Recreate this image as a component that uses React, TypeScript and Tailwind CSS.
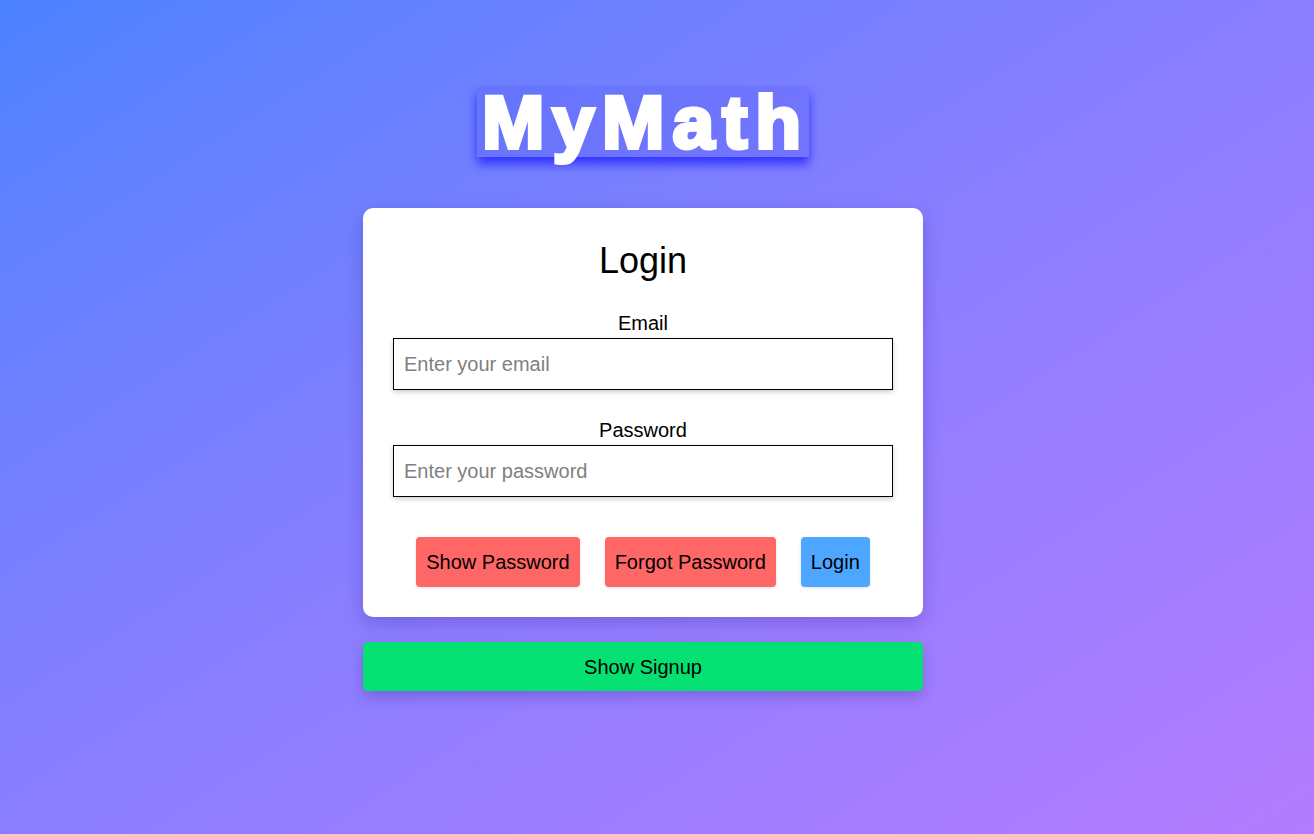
import { useState } from "react";

const FONT = "font-['Liberation_Sans',Arial,sans-serif]";

export default function App() {
  const [showPassword, setShowPassword] = useState(false);

  return (
    <div
      className={`${FONT} min-h-screen w-full bg-gradient-to-br from-[#4b82ff] via-[#8a7eff] to-[#b47cff] flex flex-col items-center pt-[87px] pr-[28px]`}
    >
      <h1 className="h-[70px] leading-[70px] pl-[5px] text-[75px] font-bold tracking-[8px] text-white [-webkit-text-stroke:4px_white] bg-[rgba(40,40,230,0.12)] shadow-[0_7px_10px_rgba(30,30,255,0.8)]">
        MyMath
      </h1>

      <div className="mt-[51px] w-[560px] bg-white rounded-[10px] px-[30px] pt-[32px] pb-[30px] shadow-[0_6px_18px_rgba(40,20,140,0.25)] text-black">
        <h2 className="text-[36px] leading-[41px] text-center">Login</h2>

        <div className="mt-[31px] flex flex-col">
          <label className="text-[20px] leading-[23px] text-center">Email</label>
          <input
            type="email"
            placeholder="Enter your email"
            className="mt-[3px] h-[52px] w-full border border-black px-[10px] text-[20px] placeholder:text-[#808080] shadow-[0_2px_5px_rgba(0,0,0,0.2)] outline-none"
          />
        </div>

        <div className="mt-[29px] flex flex-col">
          <label className="text-[20px] leading-[23px] text-center">Password</label>
          <input
            type={showPassword ? "text" : "password"}
            placeholder="Enter your password"
            className="mt-[3px] h-[52px] w-full border border-black px-[10px] text-[20px] placeholder:text-[#808080] shadow-[0_2px_5px_rgba(0,0,0,0.2)] outline-none"
          />
        </div>

        <div className="mt-[40px] flex justify-center gap-[25px]">
          <button
            onClick={() => setShowPassword((s) => !s)}
            className="h-[50px] px-[10px] rounded-[4px] bg-[#ff6666] text-[20px] shadow-[0_1px_3px_rgba(0,0,0,0.12)]"
          >
            Show Password
          </button>
          <button className="h-[50px] px-[10px] rounded-[4px] bg-[#ff6666] text-[20px] shadow-[0_1px_3px_rgba(0,0,0,0.12)]">
            Forgot Password
          </button>
          <button className="h-[50px] px-[10px] rounded-[4px] bg-[#4da6ff] text-[20px] shadow-[0_1px_3px_rgba(0,0,0,0.12)]">
            Login
          </button>
        </div>
      </div>

      <button className="mt-[25px] w-[560px] h-[49px] rounded-[5px] bg-[#04e072] text-[20px] text-black shadow-[0_6px_14px_rgba(40,20,140,0.25)]">
        Show Signup
      </button>
    </div>
  );
}
